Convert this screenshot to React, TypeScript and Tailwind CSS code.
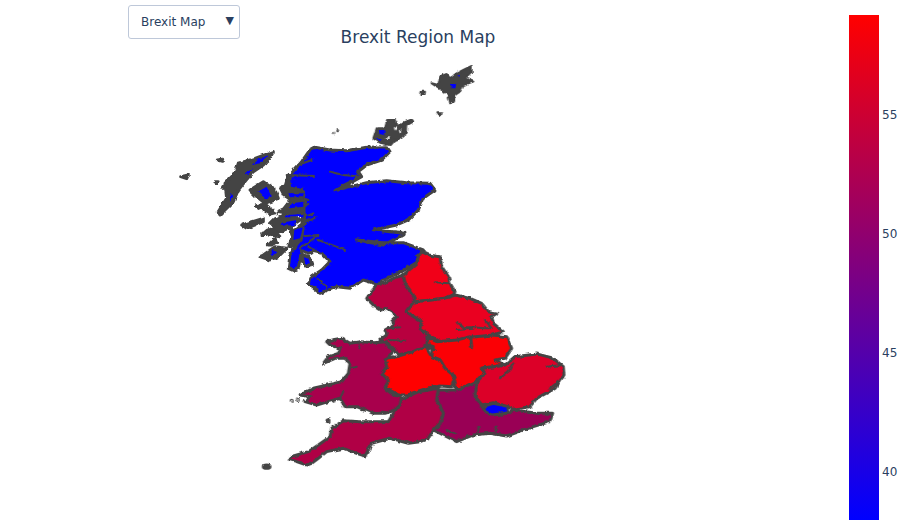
type Poly = { fill: string; points: string };

const england: Poly[] = [
  { fill: "#b8003f", points: "430,75 435,100 460,135 465,155 440,185 485,215 480,235 505,255 500,285 510,295 465,305 415,315 395,290 360,270 380,255 375,240 400,225 395,215 410,200 400,190 375,175 360,180 345,170 320,145 350,105 370,100 400,85" },
  { fill: "#f10018", points: "485,5 505,15 540,20 545,50 565,80 570,100 585,125 580,135 555,145 515,150 465,155 460,135 435,100 430,75 470,40 475,20" },
  { fill: "#ea0020", points: "465,155 515,150 555,145 585,135 630,145 665,160 685,185 710,190 695,200 700,220 730,245 700,255 670,262 635,262 630,265 600,270 565,275 540,275 505,255 480,235 485,215 440,185" },
  { fill: "#fb0005", points: "500,260 530,275 590,270 630,260 635,290 632,262 700,255 740,260 755,295 735,325 705,330 735,345 700,350 665,355 675,370 650,395 590,420 580,395 585,380 555,355 540,330 515,320 520,290 505,285" },
  { fill: "#ff0000", points: "495,288 515,320 540,330 555,355 585,380 580,395 575,410 540,408 500,415 470,425 440,435 415,435 380,415 375,385 365,372 380,355 375,325 410,320 460,305" },
  { fill: "#dc0028", points: "765,320 830,312 880,325 910,350 912,375 885,415 830,445 810,470 760,478 740,470 700,458 665,465 645,440 650,395 675,370 665,355 705,350 735,345" },
  { fill: "#990055", points: "590,420 650,395 645,440 665,465 675,485 695,495 740,490 760,480 830,490 878,490 870,515 820,530 790,540 740,558 690,550 640,555 590,575 560,560 520,540 540,520 550,490 530,450 535,420" },
  { fill: "#0000ff", points: "668,470 700,460 745,470 740,490 695,495 675,485" },
  { fill: "#b00045", points: "535,415 530,450 550,490 540,520 520,540 505,565 480,575 445,580 390,565 335,580 315,618 290,610 250,595 200,605 175,625 155,640 140,645 110,635 85,628 100,618 145,605 175,585 210,560 215,535 250,512 300,515 385,515 400,490 425,450 460,432 475,425" },
  { fill: "#a8004c", points: "200,275 215,270 245,265 270,280 300,275 345,278 375,275 400,305 375,330 380,350 365,370 385,390 375,415 400,435 425,440 420,465 405,480 375,490 340,490 290,470 255,470 240,445 205,455 170,465 135,455 150,440 120,435 160,415 245,395 265,370 270,340 255,325 225,325 190,340 205,320 235,310 240,295 210,285" },
];

const englandLines = [
  "525,97 565,100",
  "590,215 610,232 645,232 670,235 695,235 675,210",
  "590,240 640,236",
  "720,385 745,365 760,340",
  "860,350 905,345",
  "870,415 895,395",
  "655,545 655,530",
  "705,545 710,530",
  "560,540 585,550",
  "385,235 420,232",
  "385,270 435,272",
  "270,355 290,350",
  "295,280 298,295",
  "240,445 250,425",
  "630,262 635,292",
  "490,285 525,300",
  "420,440 470,425",
  "585,410 600,418",
];

const scotlandMain = "435,262 480,270 530,272 590,262 650,260 660,275 635,300 590,315 565,335 575,350 540,370 510,385 495,392 540,380 590,368 650,362 710,368 780,370 795,390 760,415 745,450 715,480 680,495 610,510 660,515 705,520 680,535 640,555 560,540 640,548 700,548 760,570 740,590 745,605 695,635 650,655 620,672 580,660 540,685 500,680 450,700 415,672 425,650 455,630 480,605 455,580 430,575 415,580 395,572 385,625 370,632 355,625 360,585 375,560 395,535 400,500 405,470 405,420 395,380 355,350 395,305 420,270";

const scotlandLines = [
  "480,335 520,345 575,350",
  "500,385 540,365 570,350",
  "610,510 690,515",
  "350,345 435,348",
  "385,315 425,300",
  "375,530 445,525",
  "390,565 445,525",
  "415,560 440,575",
  "445,540 525,570",
  "400,415 415,420",
  "400,440 415,432",
  "395,475 430,460",
  "395,490 440,472",
  "415,672 445,692",
  "440,655 470,680",
];

// lochs and sea lanes of the west coast, in the scale of the left crop
const westLace = "340,100 330,135 315,145 325,165 345,180 325,205 305,215 330,220 300,235 285,250 300,260 275,270 260,285 290,285 345,265 350,290 340,320 360,320 385,290 395,240 395,180 380,140 345,110";

const laceBlue = [
  "345,115 385,128 385,148 348,140",
  "340,160 385,160 385,172 345,172",
  "350,190 385,185 385,200 345,205",
  "335,225 385,222 385,232 330,232",
  "320,248 365,240 360,255 315,258",
  "358,270 385,262 375,295 355,300",
];

const laceWhite = [
  "298,208 310,212 303,220",
  "352,262 378,244 376,250 356,267",
  "368,232 376,230 372,236",
  "330,290 344,272 340,290",
];

const westIslands = [
  "310,275 300,295 280,315 250,335 225,365 205,390 190,425 150,465 145,455 170,415 165,370 195,340 205,310 255,295",
  "240,390 280,365 315,390 325,415 285,430 255,405",
  "258,437 285,432 300,445 320,458 300,462 280,450",
  "215,495 280,475 280,485 230,505",
  "280,585 315,560 350,565 325,590 300,600 270,590",
  "398,585 420,590 428,612 405,618 395,600",
  "275,520 310,510 330,530 295,525",
  "295,555 315,535 320,545 305,555",
  "135,365 145,365 140,370",
  "155,380 165,378 160,386",
  "142,300 158,298 155,304",
  "32,350 55,345 50,356",
];

const westBlue = [
  "295,285 260,300 245,315 270,310",
  "250,325 225,340 235,345",
  "180,400 190,405 180,425",
  "265,395 290,380 305,410 285,415",
  "305,570 320,575 305,590",
  "402,592 416,596 420,610 406,612",
];

const northIslands = [
  "395,70 415,75 420,50 440,42 450,55 470,40 490,30 515,18 515,35 495,55 520,65 490,75 480,95 465,105 465,125 450,130 445,105 425,90",
  "365,95 375,95 374,102 364,102",
  "412,160 424,160 420,168",
  "220,235 230,205 255,205 262,180 285,180 290,200 305,190 335,178 340,185 322,195 320,218 300,235 285,240 272,255 240,248",
];

const northBlue = [
  "452,72 468,72 466,85 454,85",
  "472,46 482,46 480,52",
  "235,210 255,210 252,225 238,222",
  "228,235 245,238 240,244",
];

const northWhite = [
  "252,234 270,232 268,237",
  "282,200 290,205 284,212",
  "296,212 304,208 302,218",
];

const ticks = ["55", "50", "45", "40"];

export default function App() {
  return (
    <div className="relative flex h-[530px] w-[919px] overflow-hidden bg-white font-['DejaVu_Sans',sans-serif] text-[#2a3f5f]">
      <div className="absolute left-[128px] top-[5px] flex h-[34px] w-[112px] items-center justify-between rounded-[3px] border border-[#bec8d9] bg-white pl-3 pr-[5px] text-xs">
        <span>Brexit Map</span>
        <span className="mb-[3px] text-[11px] leading-none">▼</span>
      </div>

      <div className="flex w-[836px] flex-col">
        <h1 className="h-[50px] pt-[27px] text-center text-[17px] font-normal leading-5">Brexit Region Map</h1>
        <svg viewBox="0 50 836 480" width={836} height={480}>
          <defs>
            <filter id="rough" x="-5%" y="-5%" width="110%" height="110%" colorInterpolationFilters="sRGB">
              <feTurbulence type="fractalNoise" baseFrequency="0.2" numOctaves={3} seed={4} />
              <feDisplacementMap in="SourceGraphic" scale={3.5} xChannelSelector="R" yChannelSelector="G" />
            </filter>
          </defs>
          <g filter="url(#rough)" strokeLinejoin="round" strokeLinecap="round">
            <g transform="translate(175 140) scale(0.3333)" stroke="#444444" strokeWidth={6}>
              <polygon points={westLace} fill="#444444" />
            </g>
            <g transform="translate(170 60) scale(0.3333)" stroke="#444444" strokeWidth={9} fill="none">
              <polygon points={scotlandMain} fill="#0000ff" />
              {scotlandLines.map((p) => (
                <polyline key={p} points={p} strokeWidth={6} />
              ))}
              {westIslands.map((p) => (
                <polygon key={p} points={p} fill="#444444" />
              ))}
              {westBlue.map((p) => (
                <polygon key={p} points={p} fill="#0000ff" stroke="none" />
              ))}
            </g>
            <g transform="translate(175 140) scale(0.3333)">
              {laceBlue.map((p) => (
                <polygon key={p} points={p} fill="#0000ff" />
              ))}
              {laceWhite.map((p) => (
                <polygon key={p} points={p} fill="#ffffff" />
              ))}
            </g>
            <g transform="translate(300 60) scale(0.3333)" stroke="#444444" strokeWidth={6}>
              {northIslands.map((p) => (
                <polygon key={p} points={p} fill="#444444" />
              ))}
              {northBlue.map((p) => (
                <polygon key={p} points={p} fill="#0000ff" stroke="none" />
              ))}
              {northWhite.map((p) => (
                <polygon key={p} points={p} fill="#ffffff" stroke="none" />
              ))}
              <circle cx={113} cy={212} r={1.5} />
              <circle cx={102} cy={219} r={0.8} />
            </g>
            <g transform="translate(260 250) scale(0.3333)" stroke="#444444" strokeWidth={9}>
              {england.map((r) => (
                <polygon key={r.points} points={r.points} fill={r.fill} />
              ))}
              {englandLines.map((p) => (
                <polyline key={p} points={p} fill="none" strokeWidth={6} />
              ))}
              <ellipse cx={20} cy={650} rx={10} ry={5} fill="#444444" />
              <circle cx={204} cy={512} r={3} fill="#444444" />
              <circle cx={95} cy={452} r={1.5} fill="#444444" />
              <circle cx={114} cy={450} r={1.5} fill="#444444" />
            </g>
          </g>
        </svg>
      </div>

      <div className="ml-[13px] mt-[15px] flex h-[505px]">
        <div className="h-full w-[30px] bg-[linear-gradient(180deg,#ff0000,#0000ff)]" />
        <div className="flex flex-col gap-[105px] pl-[3px] pt-[93px] text-xs leading-[14px]">
          {ticks.map((t) => (
            <span key={t}>{t}</span>
          ))}
        </div>
      </div>
    </div>
  );
}
